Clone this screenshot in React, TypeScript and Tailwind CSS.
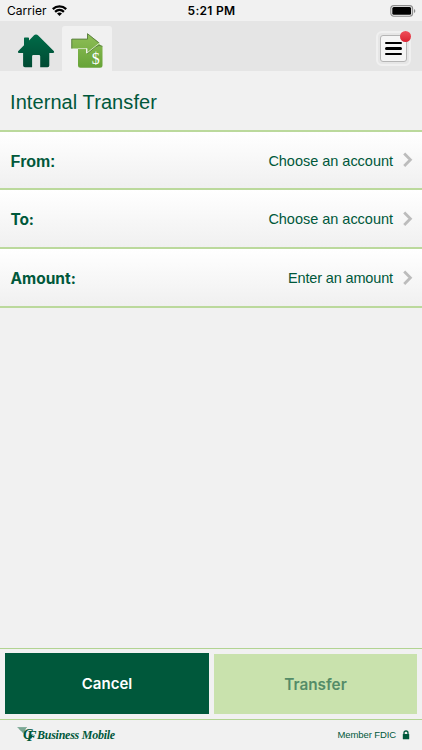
import clsx from 'clsx';

interface FieldRowProps {
  label: string;
  value: string;
  labelClass: string;
  valueClass: string;
  className: string;
}

function WifiIcon() {
  return (
    <svg width="15" height="11" viewBox="0 0 15 11" fill="none" stroke="#000" strokeWidth="2.3">
      <path d="M0.8 4.1C4.6 0.4 10.4 0.4 14.2 4.1" />
      <path d="M3.1 6.8C5.7 4.4 9.3 4.4 11.9 6.8" />
      <path d="M7.5 11L5 8.6Q7.5 6.5 10 8.6Z" fill="#000" stroke="none" />
    </svg>
  );
}

function BatteryIcon() {
  return (
    <svg width="26" height="12" viewBox="0 0 26 12">
      <rect x="0.8" y="0.6" width="21.8" height="10.6" rx="3" fill="#f1f1f1" stroke="#8c8c8c" strokeWidth="1.1" />
      <rect x="2.3" y="2.1" width="18.8" height="7.6" rx="1.5" fill="#000" />
      <path d="M24 4V8Q25.3 7.5 25.3 6T24 4Z" fill="#8c8c8c" />
    </svg>
  );
}

function HomeIcon() {
  return (
    <svg width="38" height="34" viewBox="0 0 38 34">
      <defs>
        <linearGradient id="home" x1="0" y1="0" x2="0" y2="1">
          <stop offset="0" stopColor="#006b48" />
          <stop offset="1" stopColor="#004a33" />
        </linearGradient>
      </defs>
      <path
        d="M19 0.6Q20.3 0.6 21.2 1.5L37 17.2Q37.8 18.7 36 18.9H32.3V31.5Q32.3 33.3 30.5 33.3H23.2V22.3Q23.2 21 21.9 21H16.4Q15.1 21 15.1 22.3V33.3H7.9Q6.1 33.3 6.1 31.5V18.9H2Q0.3 18.7 1.1 17.2L7 11.2V4.2Q7 3.5 7.7 3.5H11.2Q12 3.5 12 4.2V6.4L16.8 1.5Q17.7 0.6 19 0.6Z"
        fill="url(#home)"
      />
    </svg>
  );
}

function TransferIcon() {
  return (
    <svg width="33" height="36" viewBox="0 0 33 36">
      <defs>
        <linearGradient id="transfer" x1="0" y1="0" x2="0" y2="36" gradientUnits="userSpaceOnUse">
          <stop offset="0" stopColor="#90bf58" />
          <stop offset="1" stopColor="#65a236" />
        </linearGradient>
      </defs>
      <path d="M7 15H15V20.5L27.5 10.5L31.5 13.5V32.3Q31.5 34.8 29 34.8H9.5Q7 34.8 7 32.3Z" fill="url(#transfer)" />
      <path d="M0.5 6H16.3V0.5L28.8 9.9L16.3 20.4V15.4H0.5Z" fill="url(#transfer)" />
      <path d="M0.8 15.5V6.1H16.5V0.7L27.8 9.8" fill="none" stroke="#577b3d" strokeWidth="0.9" />
      <path d="M16.2 20.9L24.6 13.9Q28 11.2 31.5 13.3" fill="none" stroke="#577b3d" strokeWidth="0.8" />
      <path d="M7 15.6H15.8V20.1L28.5 10" fill="none" stroke="#eff5e9" strokeWidth="0.7" />
      <text x="20.7" y="30.8" fontSize="16" fontFamily="Liberation Serif, serif" fill="#fff">$</text>
    </svg>
  );
}

function ChevronIcon() {
  return (
    <svg width="10" height="16" viewBox="0 0 10 16" fill="none">
      <path d="M1.2 1.5L7.4 7.8L1.2 14.1" stroke="#bcbcbc" strokeWidth="2.8" />
    </svg>
  );
}

function BrandLogo() {
  return (
    <svg width="20" height="17" viewBox="0 0 20 17">
      <path d="M0.5 1.5H9.5L8 4V9Z" fill="#8fb5a4" />
      <path d="M0.5 1.5H10M2 2.9H9M3.5 4.3H8.5M5 5.7H8" stroke="#4e8a71" strokeWidth="0.5" />
      <text x="6" y="13.2" fontSize="14.5" fontWeight="bold" fontStyle="italic" fontFamily="Liberation Serif, serif" letterSpacing="-6.8" fill="#00583b">
        G<tspan dy="1.5">F</tspan>
      </text>
    </svg>
  );
}

function LockIcon() {
  return (
    <svg width="8" height="10" viewBox="0 0 8 10">
      <path d="M2 4.5V3Q2 1 4 1T6 3V4.5" fill="none" stroke="#00583b" strokeWidth="1.3" />
      <rect x="0.8" y="4" width="6.4" height="5.3" rx="0.5" fill="#00583b" />
    </svg>
  );
}

function FieldRow({ label, value, labelClass, valueClass, className }: FieldRowProps) {
  return (
    <button
      className={clsx(
        'flex w-full items-center justify-between border-b-2 border-[#bbd99c] bg-linear-to-b from-white to-[#f0f0f0] pr-[9px] pl-[10.5px] text-[#00583b]',
        className,
      )}
    >
      <span className={clsx('pt-[3px] font-bold', labelClass)}>{label}</span>
      <span className="flex items-center gap-[10px]">
        <span className={clsx('pt-[3px] text-[14.5px]', valueClass)}>{value}</span>
        <ChevronIcon />
      </span>
    </button>
  );
}

export default function App() {
  return (
    <div className="flex h-[750px] w-full flex-col overflow-hidden bg-[#f1f1f1] font-['Liberation_Sans',sans-serif] text-[#00583b]">
      <div className="grid h-[21px] shrink-0 grid-cols-3 items-center pr-[6px] pl-[7px] font-['Inter',sans-serif] text-black">
        <div className="flex items-center gap-[5px]">
          <span className="text-[12px] tracking-[0.05px]">Carrier</span>
          <WifiIcon />
        </div>
        <span className="pt-px text-center text-[12px] font-semibold tracking-[0.3px]">5:21 PM</span>
        <div className="flex justify-end">
          <BatteryIcon />
        </div>
      </div>

      <header className="flex h-[50px] shrink-0 items-end justify-between bg-[#e5e5e5] pr-[11px] pl-[17px]">
        <nav className="flex items-end">
          <button className="mb-[3px] w-[45px]"><HomeIcon /></button>
          <button className="flex h-[45px] w-[50px] justify-center rounded-t-[3px] bg-[#f1f1f1] pt-[7px]">
            <TransferIcon />
          </button>
        </nav>
        <button className="relative mb-[5px] flex h-[35px] w-[35px] items-center justify-center rounded-[6px] border-2 border-[#f0f0f0] bg-[#e6e6e6]">
          <span className="flex h-[27px] w-[27px] flex-col items-center justify-center gap-[3px] rounded-[3px] border border-[#b5b5b5] bg-[#f5f5f5]">
            <span className="h-[2.5px] w-[17px] rounded-full bg-black" />
            <span className="h-[2.5px] w-[17px] rounded-full bg-black" />
            <span className="h-[2.5px] w-[17px] rounded-full bg-black" />
          </span>
          <span className="absolute -top-[2px] -right-[2px] h-[11px] w-[11px] rounded-full bg-linear-to-b from-[#f04d59] to-[#d91f30]" />
        </button>
      </header>

      <div className="flex h-[61px] shrink-0 items-center border-b-2 border-[#bbd99c] pt-[3px] pl-[10px]">
        <h1 className="text-[20px] tracking-[0.08px]">Internal Transfer</h1>
      </div>

      <main className="flex-1">
        <FieldRow label="From:" value="Choose an account" labelClass="text-[16px] tracking-[-0.1px]" valueClass="tracking-[-0.02px]" className="h-[58px]" />
        <FieldRow label="To:" value="Choose an account" labelClass="font-['Inter',sans-serif] text-[15.5px] tracking-[-0.2px]" valueClass="tracking-[-0.02px]" className="h-[59px]" />
        <FieldRow label="Amount:" value="Enter an amount" labelClass="font-['Inter',sans-serif] text-[15.5px]" valueClass="tracking-[-0.15px]" className="h-[59px]" />
      </main>

      <div className="flex h-[72px] shrink-0 items-end gap-[5px] border-y border-[#b2d492] px-[5px] pb-[5px] font-['Inter',sans-serif] text-[15px] font-semibold">
        <button className="h-[61px] w-[204px] bg-[#00583b] pt-[2px] text-white">Cancel</button>
        <button className="h-[60px] flex-1 bg-[#c9e2ad] pt-[2px] text-[15.3px] text-[#548c68]">Transfer</button>
      </div>

      <footer className="flex h-[30px] shrink-0 items-center justify-between pr-3 pl-[17px]">
        <div className="flex items-center pb-px">
          <BrandLogo />
          <span className="font-['Liberation_Serif',serif] text-[12px] font-bold tracking-[-0.25px] italic">Business Mobile</span>
        </div>
        <div className="flex items-center gap-[6px]">
          <span className="text-[9.5px] tracking-[-0.1px]">Member FDIC</span>
          <LockIcon />
        </div>
      </footer>
    </div>
  );
}
